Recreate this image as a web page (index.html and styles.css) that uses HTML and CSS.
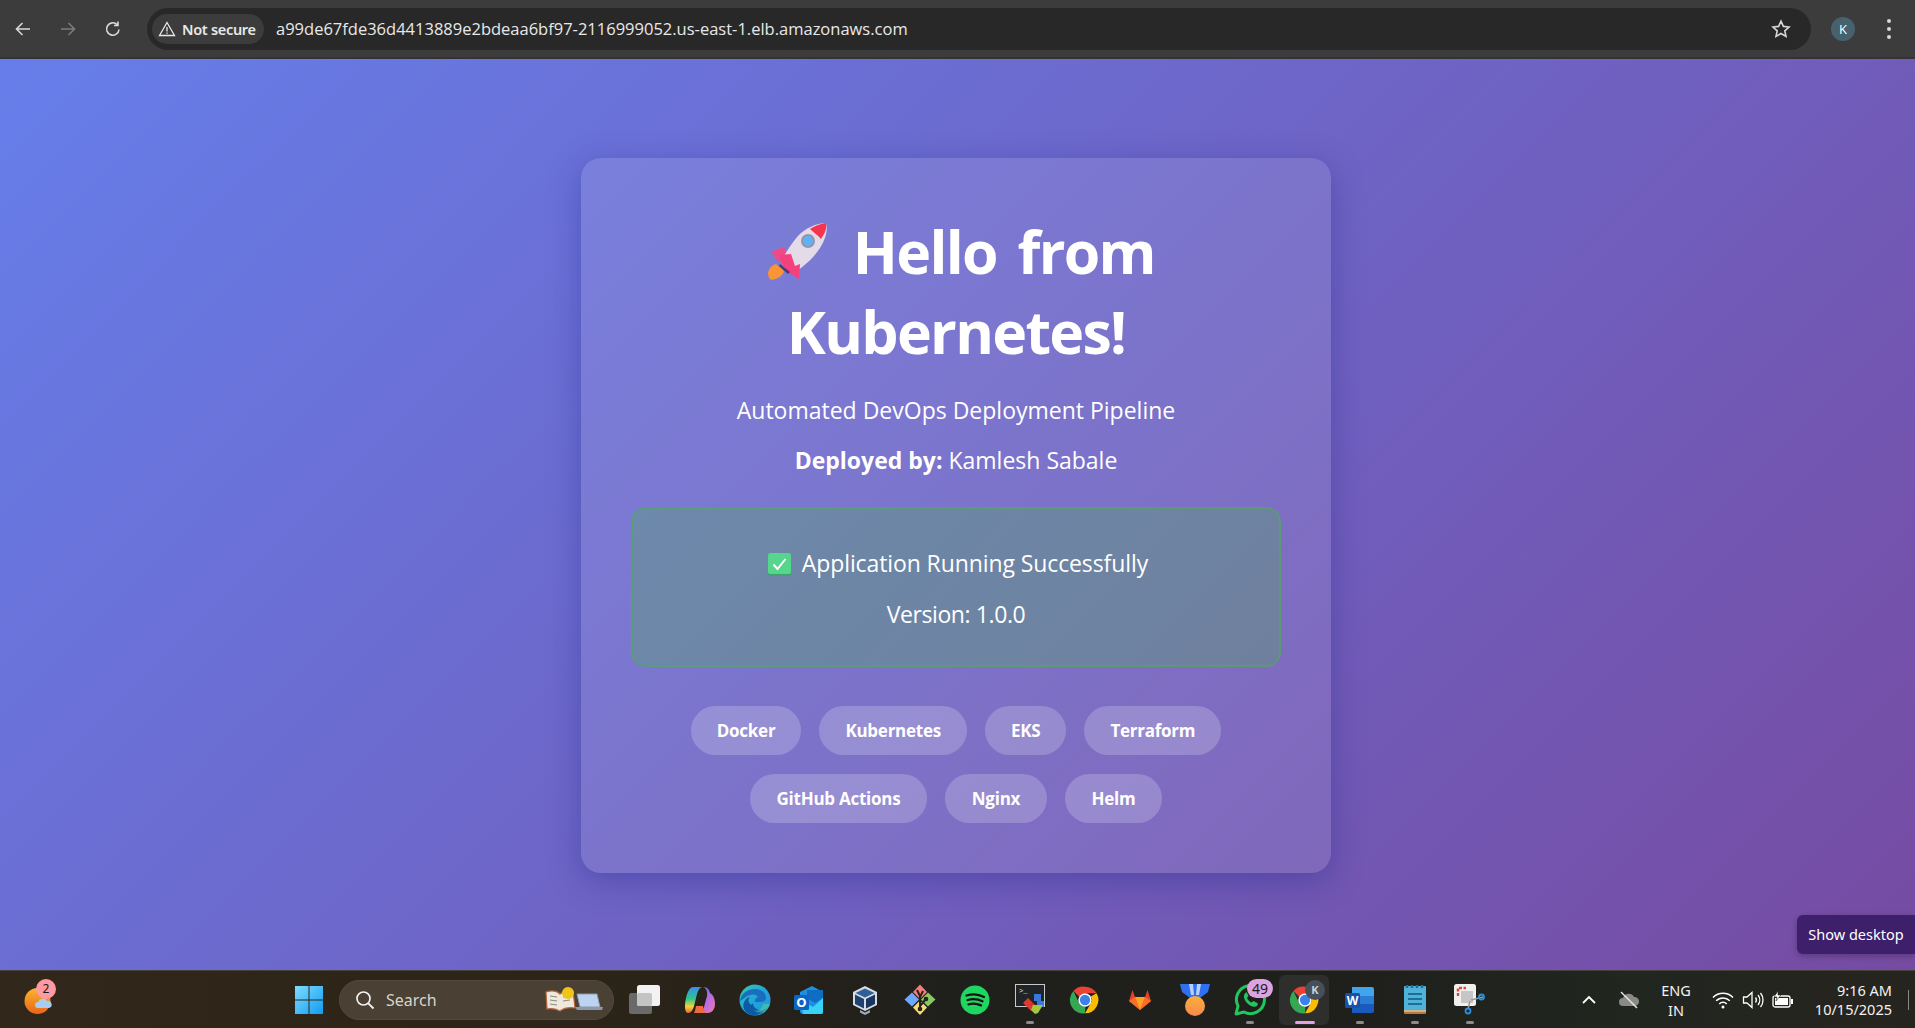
FILE: index.html
```html
<!DOCTYPE html>
<html lang="en">
<head>
    <meta charset="UTF-8">
    <title>Hello from Kubernetes</title>
    <link rel="stylesheet" href="styles.css">
</head>
<body>
    <svg class="defs" width="0" height="0">
        <symbol id="chrome" viewBox="0 0 36 36">
            <path d="M18 3a15 15 0 0 1 13 7.500H18a7.500 7.500 0 0 0-6.500 3.750L5 7.900A15 15 0 0 1 18 3z" fill="#ea4335"/>
            <path d="M31 10.500A15 15 0 0 1 18 33l6.500-11.250A7.500 7.500 0 0 0 24.500 14z" fill="#fbbc04"/>
            <path d="M18 33A15 15 0 0 1 5 7.900l6.500 13.850a7.500 7.500 0 0 0 7 3.700z" fill="#34a853"/>
            <circle cx="18" cy="18" r="7.500" fill="#fff"/>
            <circle cx="18" cy="18" r="5.800" fill="#3b82e8"/>
        </symbol>
    </svg>

    <!-- browser bar -->
    <div class="toolbar">
        <svg class="tool-icon" viewBox="0 0 20 20"><path d="M17 10H4M9.500 4 3.500 10l6 6" fill="none" stroke="#d8d8d8" stroke-width="1.600"/></svg>
        <svg class="tool-icon" viewBox="0 0 20 20"><path d="M3 10h13M10.500 4l6 6-6 6" fill="none" stroke="#7c7c7c" stroke-width="1.600"/></svg>
        <svg class="tool-icon" viewBox="0 0 20 20"><path d="M16 10.500A6.200 6.200 0 1 1 14.200 5.600M15 2.500v4h-4" fill="none" stroke="#d8d8d8" stroke-width="1.600"/></svg>
        <div class="omnibox">
            <div class="not-secure">
                <svg width="18" height="18" viewBox="0 0 18 18"><path d="M9 2.500 16.500 15.500h-15zM9 7v4.500M9 12.500v1.300" fill="none" stroke="#e8e8e8" stroke-width="1.300"/></svg>
                <span>Not secure</span>
            </div>
            <span class="url">a99de67fde36d4413889e2bdeaa6bf97-2116999052.us-east-1.elb.amazonaws.com</span>
            <svg class="star" width="20" height="20" viewBox="0 0 20 20"><path d="M10 2.200l2.400 5.200 5.600.6-4.200 3.800 1.200 5.600-5-2.900-5 2.900 1.200-5.600L2 8l5.600-.6z" fill="none" stroke="#d8d8d8" stroke-width="1.600"/></svg>
        </div>
        <div class="avatar">K</div>
        <div class="dots"><i></i><i></i><i></i></div>
    </div>

    <!-- page -->
    <main class="page">
        <div class="card">
            <h1>
                <svg class="rocket" width="60" height="58" viewBox="0 0 60 58">
                    <path d="M16 25 3 30l7 9 9-6z" fill="#ef4a86"/>
                    <path d="M0 51c1-5 4-8 8-9l8 7c-1 4-5 8-13 9-2-2-3-4-3-7z" fill="#fb9435"/>
                    <path d="M58 1C49 1 37 6 29 15 21 25 16 33 13 41l12 10c9-5 20-14 27-25 6-10 8-18 6-25z" fill="#e4dbe9"/>
                    <path d="M58 1c-5 .5-11 2.500-16 6 3 3 8 6 11 10 4-6 6-10 5-16z" fill="#f5344f"/>
                    <circle cx="40" cy="19" r="7" fill="#9a93a8"/>
                    <circle cx="40" cy="19" r="5" fill="#5fb2f5"/>
                    <path d="M13 41 11 33l12-1 4 12 5-2-1 15-9-6z" fill="#f4407c"/>
                    <path d="M12 42l10 8-2 2-9-8z" fill="#4b3a78"/>
                </svg>
                Hello from Kubernetes!
            </h1>
            <p class="subtitle">Automated DevOps Deployment Pipeline</p>
            <p class="deployed"><strong>Deployed by:</strong> Kamlesh Sabale</p>
            <div class="status">
                <p class="running-text">
                    <svg class="check" width="23" height="23" viewBox="0 0 23 23">
                        <rect width="23" height="23" rx="2.500" fill="#3fa36d"/>
                        <rect width="23" height="21" rx="2.500" fill="#56d68d"/>
                        <path d="M5.500 11.500l4 4.500 8-10" fill="none" stroke="#fff" stroke-width="2"/>
                    </svg>
                    Application Running Successfully
                </p>
                <p class="version">Version: 1.0.0</p>
            </div>
            <div class="chips">
                <span class="chip">Docker</span>
                <span class="chip">Kubernetes</span>
                <span class="chip">EKS</span>
                <span class="chip">Terraform</span>
            </div>
            <div class="chips chips-wide">
                <span class="chip">GitHub Actions</span>
                <span class="chip">Nginx</span>
                <span class="chip">Helm</span>
            </div>
        </div>
        <div class="show-desktop">Show desktop</div>
    </main>

    <!-- windows taskbar -->
    <div class="taskbar">
        <div class="weather">
            <svg width="34" height="30" viewBox="0 0 34 30">
                <defs><linearGradient id="sun" x1="0" y1="0" x2="0" y2="1"><stop offset="0" stop-color="#fbb62b"/><stop offset="1" stop-color="#e8641c"/></linearGradient></defs>
                <circle cx="13.500" cy="15" r="13" fill="url(#sun)"/>
                <path d="M14 22a3 3 0 0 1 0-6 5 5 0 0 1 9-1 3.500 3.500 0 0 1 2 7z" fill="#a8cdf0"/>
            </svg>
            <span class="weather-badge">2</span>
        </div>
        <div class="slot">
            <svg width="30" height="30" viewBox="0 0 30 30">
                <defs><linearGradient id="win" x1="0" y1="0" x2="1" y2="1"><stop offset="0" stop-color="#7fdcff"/><stop offset="1" stop-color="#0f9cf2"/></linearGradient></defs>
                <path d="M1 1h13.500v13.500H1zM15.500 1H29v13.500H15.500zM1 15.500h13.500V29H1zM15.500 15.500H29V29H15.500z" fill="url(#win)"/>
            </svg>
        </div>
        <div class="search">
            <svg width="20" height="20" viewBox="0 0 20 20"><circle cx="8.500" cy="8.500" r="6.500" fill="none" stroke="#f2f2f2" stroke-width="1.700"/><path d="M13.300 13.300 18.500 18.500" stroke="#f2f2f2" stroke-width="1.900"/></svg>
            <span>Search</span>
            <svg class="search-art" width="60" height="26" viewBox="0 0 60 26">
                <path d="M2 5c6-2 11-1 14 2 4-3 8-4 13-3l2 17c-6-1-11 0-15 3-4-2-8-3-13-2z" fill="#efe8dc" stroke="#b5683f" stroke-width="1.200"/>
                <path d="M6 9l7 1M6 13l7 1M6 17l7 1M19 10l7-1M19 14l7-1" stroke="#8a8a80"/>
                <circle cx="24" cy="6" r="6" fill="#f0c517"/>
                <path d="M33 7h20l3 13H36z" fill="#bcd4f2" stroke="#8d99ab"/>
                <path d="M31 20h28l-1 3H33z" fill="#8d99ab"/>
            </svg>
        </div>
        <div class="slot">
            <svg width="32" height="30" viewBox="0 0 32 30">
                <rect x="0" y="8" width="23" height="21" rx="2.500" fill="#6a6a6a"/>
                <rect x="8" y="0" width="23" height="21" rx="2.500" fill="#f2f2f2"/>
                <rect x="8" y="8" width="15" height="13" rx="2" fill="#c4c4c4"/>
            </svg>
        </div>
        <div class="slot">
            <svg width="30" height="28" viewBox="0 0 30 28">
                <defs>
                    <linearGradient id="cop1" x1="0" y1="0" x2="0" y2="1"><stop offset="0" stop-color="#3a8df0"/><stop offset=".45" stop-color="#2fc58c"/><stop offset=".75" stop-color="#f2d23c"/><stop offset="1" stop-color="#ee6a2e"/></linearGradient>
                    <linearGradient id="cop2" x1="0" y1="0" x2="1" y2="1"><stop offset="0" stop-color="#2f6fe8"/><stop offset=".5" stop-color="#b56ae8"/><stop offset="1" stop-color="#f07aa8"/></linearGradient>
                </defs>
                <path d="M8 1h9c-3 1-4 4-5 7l-3 12c-1 4-3 7-6 7-2 0-3-3-3-6 0-8 3-20 8-20z" fill="url(#cop1)"/>
                <path d="M18 1c4 0 6 2 7 6 2 1 5 4 5 11 0 5-3 9-7 9h-9c3-1 4-3 5-6l3-11c.5-3 0-8-4-9z" fill="url(#cop2)"/>
                <path d="M9 27h12c-2-3-3-5-3-7h-7c-.5 3-1 5-2 7z" fill="#f06a3c"/>
            </svg>
        </div>
        <div class="slot">
            <svg width="32" height="32" viewBox="0 0 32 32">
                <defs>
                    <linearGradient id="edge1" x1="0" y1="0" x2="1" y2="1"><stop offset="0" stop-color="#38c9a8"/><stop offset=".5" stop-color="#1fa5d8"/><stop offset="1" stop-color="#2f8ee0"/></linearGradient>
                </defs>
                <circle cx="16" cy="16" r="15.500" fill="url(#edge1)"/>
                <path d="M1 17C2 9 9 5 16 5c6 0 10 3 11 8 .5 3-2 5-5 5h-6c-1-3 3-5 3-5-1-2-4-3-7-2-6 1-9 6-11 6z" fill="#1a6ec0"/>
                <path d="M14 19c0 5 5 8 10 7 2-.5 4-2 5-3-3 5-8 8-14 8-4 0-8-2-10-6-2-5 1-11 6-12-2 2-2 5 0 7 1 1 2 1 3-1z" fill="#0c59a4"/>
                <path d="M24 20h7c-1 3-3 6-6 8-3 1-8 1-10-2 4 2 8-1 9-6z" fill="#54e08c" opacity=".5"/>
            </svg>
        </div>
        <div class="slot">
            <svg width="32" height="28" viewBox="0 0 32 28">
                <path d="M6 6 18 0l11 6v22H9a3 3 0 0 1-3-3z" fill="#1f8fe0"/>
                <path d="M13 4h16v8l-8 5-8-5z" fill="#0f6ec4"/>
                <path d="M6 14l13 7 10-9v13a3 3 0 0 1-3 3H9z" fill="#38d2f5"/>
                <rect x="0" y="9" width="15" height="15" rx="1.500" fill="#0a66c2"/>
                <text class="app-letter" x="7.500" y="21" font-size="13">O</text>
            </svg>
        </div>
        <div class="slot">
            <svg width="26" height="30" viewBox="0 0 26 30">
                <path d="M13 1 25 7v13l-12 6L1 20V7z" fill="#d5dce6"/>
                <path d="M13 3.500 22.500 8 13 12.500 3.500 8z" fill="#2e5f96"/>
                <path d="M3 9.500l9 4.500v9.500l-9-4.500z" fill="#20406e"/>
                <path d="M23 9.500 14 14v9.500l9-4.500z" fill="#1a3560"/>
                <path d="M8 25l5 2.500 5-2.500v2.500L13 30l-5-2.500z" fill="#9eaabb"/>
            </svg>
        </div>
        <div class="slot">
            <svg width="32" height="32" viewBox="0 0 32 32">
                <path d="M16 .5 23 8l-7 7-7-7z" fill="#f47c7c"/>
                <path d="M8 8.500l7 7-7 7-7.500-7z" fill="#6ea8fe"/>
                <path d="M24 8.500l7.500 7-7.500 7-7-7z" fill="#86c95f"/>
                <path d="M16 16.500l7 7-7 7.500-7-7.500z" fill="#f6dc78"/>
                <path d="M13 6l3 6v13M19 7l-3 6M22 15l-6 7" fill="none" stroke="#26231f" stroke-width="2"/>
                <circle cx="22" cy="15" r="2.300" fill="#26231f"/><circle cx="16" cy="25" r="2.300" fill="#26231f"/>
            </svg>
        </div>
        <div class="slot">
            <svg width="30" height="30" viewBox="0 0 30 30">
                <circle cx="15" cy="15" r="14.500" fill="#1ed760"/>
                <path d="M6.500 10.500c6-1.800 12.500-1.300 17.500 1.500M7.500 15c5-1.400 10.500-1 15 1.300M8.500 19.300c4.200-1.100 8.600-.8 12.500 1.100" fill="none" stroke="#191414" stroke-width="2.300" stroke-linecap="round"/>
            </svg>
        </div>
        <div class="slot running">
            <svg width="30" height="32" viewBox="0 0 30 32">
                <rect x=".5" y=".5" width="29" height="22" fill="#1f2426" stroke="#c9c9c9"/>
                <text class="term-text" x="4" y="9" font-size="7">&gt;_</text>
                <path d="M19 10h7v7h3v6h-7v-6h-3z" fill="#3a78d8"/>
                <path d="M8 19l5-5 5 5-5 5z" fill="#e0392f"/>
                <path d="M13 24l5-5 3 3-5 5z" fill="#e0392f"/>
                <path d="M18 21h10l-5 8-3 1-4-4z" fill="#a4c93a"/>
            </svg>
        </div>
        <div class="slot">
            <svg width="32" height="32"><use href="#chrome"/></svg>
        </div>
        <div class="slot">
            <svg width="22" height="20" viewBox="0 0 22 20">
                <path d="M3.500 0 6 7h10l2.500-7L22 11 11 20 0 11z" fill="#e24329"/>
                <path d="M0 11l6-4 5 13z" fill="#fc6d26"/>
                <path d="M22 11l-6-4-5 13z" fill="#fc6d26"/>
                <path d="M6 7h10l-5 13z" fill="#fca326"/>
            </svg>
        </div>
        <div class="slot">
            <svg width="32" height="32" viewBox="0 0 32 32">
                <defs><linearGradient id="medal" x1="0" y1="0" x2="0" y2="1"><stop offset="0" stop-color="#fbae3e"/><stop offset="1" stop-color="#f58a4b"/></linearGradient></defs>
                <path d="M1 0h30l-2 8-8 6H11L3 8z" fill="#2f6ff0"/>
                <path d="M10 0h4l1 11h-3zM18 0h4l-2 11h-3z" fill="#b7d2fa"/>
                <circle cx="16" cy="22" r="10" fill="url(#medal)"/>
            </svg>
        </div>
        <div class="slot running">
            <svg width="32" height="32" viewBox="0 0 32 32">
                <path d="M2 30 4 22A14 14 0 1 1 10 28z" fill="none" stroke="#22c55e" stroke-width="3" stroke-linejoin="round"/>
                <path d="M11 9.500c-2 2-1 6 2 9.500 3 3 7 5 10 3l1-2.500-4.500-2.500-2 1.500c-2-1-3.500-2.500-4.500-4.500l1.500-2L12.500 8z" fill="#22c55e"/>
            </svg>
            <span class="app-badge">49</span>
        </div>
        <div class="slot active">
            <svg width="32" height="32"><use href="#chrome"/></svg>
            <span class="profile-badge">K</span>
        </div>
        <div class="slot running">
            <svg width="30" height="28" viewBox="0 0 30 28">
                <path d="M7 1h20a2 2 0 0 1 2 2v7H7z" fill="#41a5ee"/>
                <path d="M7 10h22v8H7z" fill="#2b7cd3"/>
                <path d="M7 18h22v7a2 2 0 0 1-2 2H7z" fill="#185abd"/>
                <rect x="0" y="7" width="15" height="15" rx="1.500" fill="#1452ac"/>
                <text class="app-letter" x="7.500" y="19" font-size="12">W</text>
            </svg>
        </div>
        <div class="slot running">
            <svg width="24" height="30" viewBox="0 0 24 30">
                <rect x="1" y="1" width="22" height="27" rx="1" fill="#4fb3d9"/>
                <rect x="1" y="25" width="22" height="4" rx="1" fill="#b57a3f"/>
                <path d="M1 26h22" stroke="#f0e6d0"/>
                <path d="M5 9h14M5 14h14M5 19h14" stroke="#1d6f96" stroke-width="2"/>
                <path d="M4 0v3M9 0v3M14 0v3M19 0v3" stroke="#1d6f96" stroke-width="2.400"/>
            </svg>
        </div>
        <div class="slot running">
            <svg width="32" height="32" viewBox="0 0 32 32">
                <rect x="0" y="0" width="22" height="22" rx="2.500" fill="#f0f0f0"/>
                <path d="M4 12V4h8" fill="none" stroke="#e0483c" stroke-width="2.400" stroke-dasharray="3 1.500"/>
                <rect x="7" y="7" width="12" height="12" fill="#c6c6c6"/>
                <path d="M17 16l12-3M16 17l-2 8" stroke="#9a9a9a" stroke-width="1.500"/>
                <circle cx="27.500" cy="13" r="2.500" fill="none" stroke="#2a8fe0" stroke-width="1.800"/>
                <circle cx="14" cy="27" r="2.500" fill="none" stroke="#2a8fe0" stroke-width="1.800"/>
            </svg>
        </div>

        <div class="tray">
            <svg class="tray-chevron" width="16" height="10" viewBox="0 0 16 10"><path d="M2 8l6-6 6 6" fill="none" stroke="#fff" stroke-width="1.800"/></svg>
            <svg class="tray-cloud" width="22" height="20" viewBox="0 0 22 20">
                <path d="M5 16a4 4 0 0 1 0-8 6 6 0 0 1 11-1 4.500 4.500 0 0 1 1 9z" fill="#8a8a86"/>
                <path d="M3 2l16 16" stroke="#e8e8e8" stroke-width="1.400"/>
            </svg>
            <div class="lang">ENG<br>IN</div>
            <svg class="tray-wifi" width="22" height="18" viewBox="0 0 22 18"><path d="M1 6.500a14 14 0 0 1 20 0M4.200 9.800a9.500 9.500 0 0 1 13.600 0M7.300 13a5 5 0 0 1 7.400 0" fill="none" stroke="#fff" stroke-width="1.500"/><circle cx="11" cy="16" r="1.500" fill="#fff"/></svg>
            <svg class="tray-volume" width="22" height="18" viewBox="0 0 22 18"><path d="M1.500 6v6h3.500l5 4.500v-15L5 6z" fill="none" stroke="#fff" stroke-width="1.300"/><path d="M13.500 6.500a4 4 0 0 1 0 5M16 4a8 8 0 0 1 0 10M18.500 2a11 11 0 0 1 0 14" fill="none" stroke="#fff" stroke-width="1.300"/></svg>
            <svg class="tray-battery" width="22" height="18" viewBox="0 0 22 18"><rect x="1" y="5" width="17" height="11" rx="2" fill="none" stroke="#fff" stroke-width="1.300"/><rect x="3" y="7" width="13" height="7" fill="#fff"/><path d="M19 8h2v5h-2z" fill="#fff"/><path d="M6 0 2 6h3l-1 4 5-6H6z" fill="#fff" stroke="#25261f" stroke-width=".6"/></svg>
            <div class="clock">9:16 AM<br>10/15/2025</div>
            <i class="tray-line"></i>
        </div>
    </div>
</body>
</html>
```

FILE: styles.css
```css
* {
    box-sizing: border-box;
}
html, body {
    height: 100%;
}
body {
    margin: 0;
    display: flex;
    flex-direction: column;
    overflow: hidden;
    font-family: "Open Sans", "Noto Sans", sans-serif;
    background-color: #1f1f1f;
}
svg {
    display: block;
    flex-shrink: 0;
}
.defs {
    position: absolute;
}

/* browser bar */
.toolbar {
    height: 59px;
    flex-shrink: 0;
    display: flex;
    align-items: center;
    padding-left: 13px;
    background-color: #3c3c3c;
    border-bottom: 2px solid #333;
}
.tool-icon {
    width: 20px;
    height: 20px;
    margin-right: 25px;
}
.omnibox {
    width: 1664px;
    height: 42px;
    margin-left: -1px;
    display: flex;
    align-items: center;
    padding: 0 20px 0 5px;
    border-radius: 21px;
    background-color: #282828;
}
.not-secure {
    height: 30px;
    width: 112px;
    flex-shrink: 0;
    display: flex;
    align-items: center;
    gap: 6px;
    padding-left: 6px;
    border-radius: 15px;
    background-color: #3c3c3c;
    color: #e8e8e8;
    font-family: "Noto Sans", sans-serif;
    font-size: 14.500px;
    font-weight: 600;
    letter-spacing: -0.3px;
    white-space: nowrap;
}
.url {
    margin-left: 12px;
    color: #e8e8e8;
    font-family: "Open Sans", sans-serif;
    font-size: 16.500px;
}
.star {
    margin-left: auto;
}
.avatar {
    width: 24px;
    height: 24px;
    margin-left: 20px;
    border-radius: 50%;
    background-color: #46626f;
    color: #fff;
    font-size: 13px;
    line-height: 24px;
    text-align: center;
}
.dots {
    margin-left: 32px;
    display: flex;
    flex-direction: column;
    gap: 4px;
}
.dots i {
    width: 4px;
    height: 4px;
    border-radius: 50%;
    background-color: #d8d8d8;
}

/* page */
.page {
    flex: 1;
    position: relative;
    display: flex;
    align-items: center;
    justify-content: center;
    padding: 2px 3px 0 0;
    background: linear-gradient(135deg, #667eea 0%, #764ba2 100%);
    color: white;
}
.card {
    width: 750px;
    height: 715px;
    padding: 50px;
    border-radius: 20px;
    background-color: rgba(255, 255, 255, 0.1);
    box-shadow: 0 8px 32px rgba(31, 38, 135, 0.37);
    text-align: center;
}
h1 {
    margin: 3px 0 0;
    font-size: 59px;
    font-weight: 700;
    line-height: 80px;
    letter-spacing: -1.700px;
    word-spacing: 7px;
}
.rocket {
    display: inline-block;
    vertical-align: -6px;
    margin: 0 4px 0 11px;
}
p {
    margin: 0;
}
.subtitle, .deployed, .status p {
    font-size: 23px;
    line-height: 32px;
}
.subtitle {
    margin-top: 23px;
}
.deployed {
    margin-top: 18px;
}
.status {
    height: 160px;
    margin-top: 31px;
    padding-top: 38px;
    border: 2px solid rgba(76, 175, 80, 0.5);
    border-radius: 15px;
    background-color: rgba(76, 175, 80, 0.3);
}
.status p + p {
    margin-top: 19px;
}
.status .running-text {
    letter-spacing: -0.1px;
}
.status .version {
    letter-spacing: -0.4px;
}
.check {
    display: inline-block;
    vertical-align: -4px;
    margin: 0 5px 0 4px;
}
.chips {
    display: flex;
    justify-content: center;
    gap: 18px;
    margin-top: 19px;
}
.status + .chips {
    margin-top: 39px;
}
.chip {
    height: 49px;
    padding: 0 26px;
    border-radius: 25px;
    background-color: rgba(255, 255, 255, 0.2);
    font-size: 17px;
    font-weight: 700;
    line-height: 49px;
    letter-spacing: -0.250px;
}
.chips-wide .chip {
    padding: 0 26.700px;
}
.show-desktop {
    position: absolute;
    right: 0;
    bottom: 16px;
    width: 118px;
    height: 39px;
    border-radius: 6px 0 0 6px;
    background-color: #3d1f6b;
    box-shadow: 0 2px 6px rgba(0, 0, 0, 0.25);
    font-family: "Noto Sans", sans-serif;
    font-size: 14.500px;
    line-height: 39px;
    text-align: center;
}

/* taskbar */
.taskbar {
    height: 58px;
    flex-shrink: 0;
    display: flex;
    align-items: center;
    border-top: 1px solid #45423d;
    background: linear-gradient(90deg, #31271a 0%, #2c2418 30%, #1f1f1c 50%, #1f1f1c 70%, #21261f 85%, #27241f 100%);
    color: #f2f2f2;
    font-family: "Noto Sans", sans-serif;
}
.weather {
    width: 281px;
    height: 50px;
    position: relative;
    display: flex;
    align-items: center;
    padding: 3px 0 0 24px;
}
.weather-badge {
    position: absolute;
    left: 36px;
    top: 4px;
    width: 20px;
    height: 20px;
    border-radius: 50%;
    background-color: #ff9aa2;
    color: #1a1a1a;
    font-size: 12px;
    line-height: 20px;
    text-align: center;
}
.slot {
    width: 55px;
    height: 50px;
    position: relative;
    flex-shrink: 0;
    display: flex;
    align-items: center;
    justify-content: center;
}
.search {
    width: 275px;
    height: 40px;
    margin: 0 3px 0 3px;
    flex-shrink: 0;
    display: flex;
    align-items: center;
    gap: 11px;
    padding: 0 9px 0 15px;
    border: 1px solid #54493c;
    border-radius: 20px;
    background-color: #4a4033;
    color: #d8d4cc;
    font-size: 16px;
}
.search-art {
    margin-left: auto;
}
.running::after, .active::after {
    content: "";
    position: absolute;
    left: 50%;
    bottom: 1px;
    width: 8px;
    height: 3px;
    margin-left: -4px;
    border-radius: 2px;
    background-color: #8c8c8c;
}
.active::before {
    content: "";
    position: absolute;
    left: 2px;
    right: 3px;
    top: 0;
    bottom: 0;
    border-radius: 6px;
    background-color: rgba(255, 255, 255, 0.07);
}
.active::after {
    width: 20px;
    margin-left: -10px;
    background-color: #e0a2e4;
}
.active svg {
    position: relative;
}
.app-badge {
    position: absolute;
    left: 25px;
    top: 4px;
    width: 26px;
    height: 19px;
    border-radius: 10px;
    background-color: #dba4e0;
    color: #1a1a1a;
    font-size: 14px;
    line-height: 19px;
    text-align: center;
}
.profile-badge {
    position: absolute;
    left: 28px;
    top: 5px;
    width: 20px;
    height: 20px;
    border-radius: 50%;
    background-color: #46505a;
    color: #c9d0d6;
    font-size: 11px;
    font-weight: 700;
    line-height: 20px;
    text-align: center;
}
.app-letter {
    fill: #fff;
    font-family: "Open Sans", sans-serif;
    font-weight: 700;
    text-anchor: middle;
}
.term-text {
    fill: #e8e8e8;
    font-family: "Liberation Mono", monospace;
}
.tray {
    margin-left: auto;
    display: flex;
    align-items: center;
    padding-right: 6px;
    font-size: 14px;
}
.tray-chevron {
    margin-right: -3px;
}
.tray-cloud {
    margin-left: 24px;
}
.lang {
    width: 50px;
    margin-left: 11px;
    font-size: 14.500px;
    line-height: 20px;
    text-align: center;
}
.tray-wifi {
    margin-left: 11px;
}
.tray-volume {
    margin-left: 8px;
}
.tray-battery {
    margin-left: 8px;
}
.clock {
    width: 90px;
    margin-left: 8px;
    font-size: 14.500px;
    line-height: 19px;
    text-align: right;
}
.tray-line {
    width: 1px;
    height: 20px;
    margin-left: 16px;
    background-color: #8a8a8a;
}
```
